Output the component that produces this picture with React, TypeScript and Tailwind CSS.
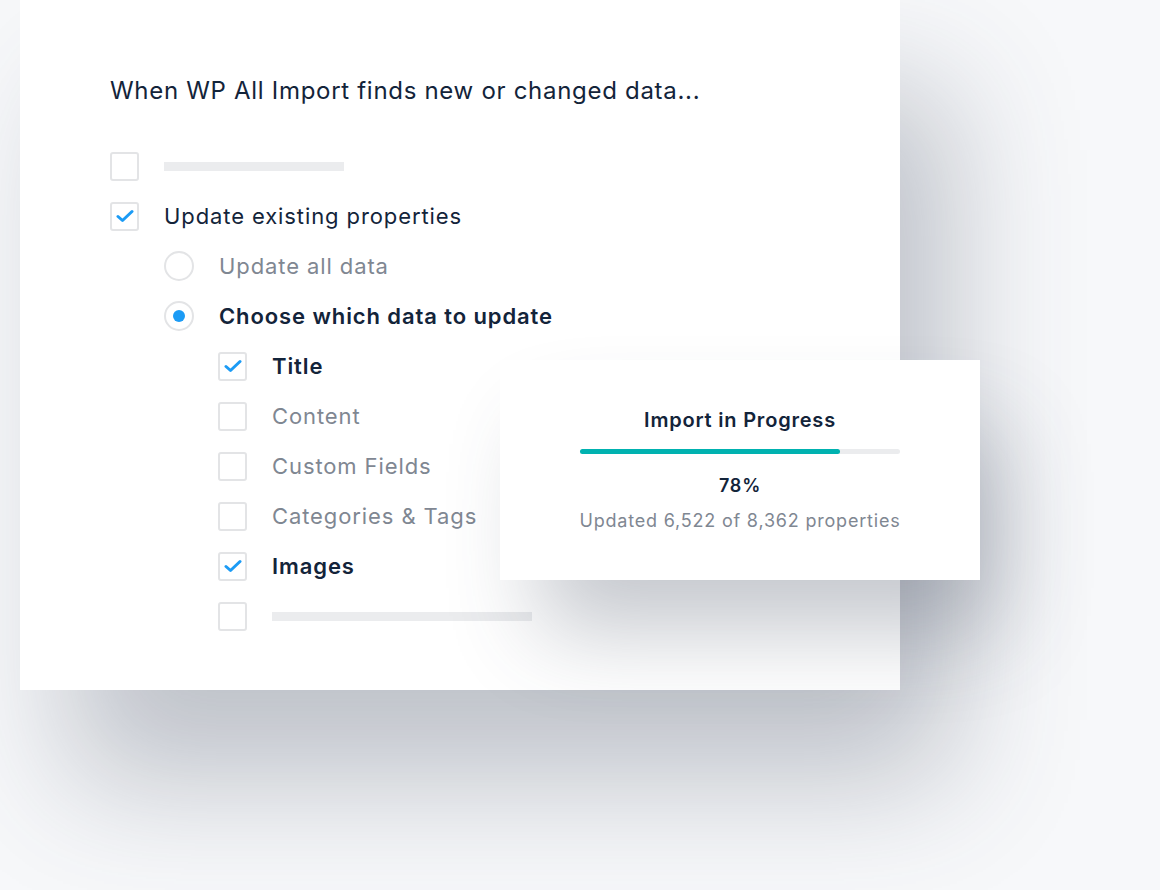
import React from "react";

const font = { fontFamily: "Inter, 'Noto Sans', sans-serif" };

function Box({ checked }: { checked?: boolean }) {
  return (
    <span className="flex h-[29px] w-[29px] shrink-0 items-center justify-center rounded-[3px] border-2 border-[#e3e4e6] bg-white">
      {checked && (
        <svg width="18" height="14" viewBox="0 0 18 14" fill="none">
          <path
            d="M2 7.5 L6.5 11.5 L16 2.5"
            stroke="#1b9bf5"
            strokeWidth="3"
            strokeLinecap="round"
            strokeLinejoin="round"
          />
        </svg>
      )}
    </span>
  );
}

function Radio({ checked }: { checked?: boolean }) {
  return (
    <span className="flex h-[30px] w-[30px] shrink-0 items-center justify-center rounded-full border-2 border-[#e3e4e6] bg-white">
      {checked && <span className="h-[12px] w-[12px] rounded-full bg-[#1b9bf5]" />}
    </span>
  );
}

function Row({
  indent,
  control,
  children,
}: {
  indent: string;
  control: React.ReactNode;
  children: React.ReactNode;
}) {
  return (
    <div className={`flex h-[50px] items-center gap-[25px] ${indent}`}>
      {control}
      {children}
    </div>
  );
}

export default function App() {
  return (
    <div className="relative h-[890px] w-[1160px] overflow-hidden bg-[#f7f8fa]" style={font}>
      {/* main card */}
      <div className="ml-[20px] h-[690px] w-[880px] bg-white pl-[90px] pt-[73px] shadow-[50px_90px_120px_0px_rgba(60,70,90,0.3)]">
        <h2 className="text-[24px] leading-[36px] tracking-[0.7px] text-[#13243a]">
          When WP All Import finds new or changed data...
        </h2>

        <div className="mt-[32px] flex flex-col text-[22px] tracking-[0.9px] text-[#13243a]">
          <Row indent="" control={<Box />}>
            <span className="h-[9px] w-[180px] bg-[#ebecee]" />
          </Row>
          <Row indent="" control={<Box checked />}>
            <span>Update existing properties</span>
          </Row>
          <Row indent="pl-[54px]" control={<Radio />}>
            <span className="text-[#7f8792]">Update all data</span>
          </Row>
          <Row indent="pl-[54px]" control={<Radio checked />}>
            <span className="font-semibold">Choose which data to update</span>
          </Row>
          <Row indent="pl-[108px]" control={<Box checked />}>
            <span className="font-semibold">Title</span>
          </Row>
          <Row indent="pl-[108px]" control={<Box />}>
            <span className="text-[#7f8792]">Content</span>
          </Row>
          <Row indent="pl-[108px]" control={<Box />}>
            <span className="text-[#7f8792]">Custom Fields</span>
          </Row>
          <Row indent="pl-[108px]" control={<Box />}>
            <span className="text-[#7f8792]">Categories &amp; Tags</span>
          </Row>
          <Row indent="pl-[108px]" control={<Box checked />}>
            <span className="font-semibold">Images</span>
          </Row>
          <Row indent="pl-[108px]" control={<Box />}>
            <span className="h-[9px] w-[260px] bg-[#ebecee]" />
          </Row>
        </div>
      </div>

      {/* progress popup */}
      <div className="absolute left-[500px] top-[360px] flex h-[220px] w-[480px] flex-col items-center bg-white pt-[46px] tracking-[0.8px] shadow-[30px_60px_90px_-10px_rgba(60,70,90,0.3)]">
        <div className="text-[20px] font-semibold leading-[28px] text-[#13243a]">Import in Progress</div>
        <div className="mt-[15px] h-[5px] w-[320px] rounded-full bg-[#ebecee]">
          <div className="h-full w-[260px] rounded-full bg-[#00b2b0]" />
        </div>
        <div className="mt-[20px] text-[18px] font-semibold leading-[24px] text-[#13243a]">78%</div>
        <div className="mt-[11px] text-[18px] leading-[24px] text-[#7f8792]">
          Updated 6,522 of 8,362 properties
        </div>
      </div>
    </div>
  );
}
